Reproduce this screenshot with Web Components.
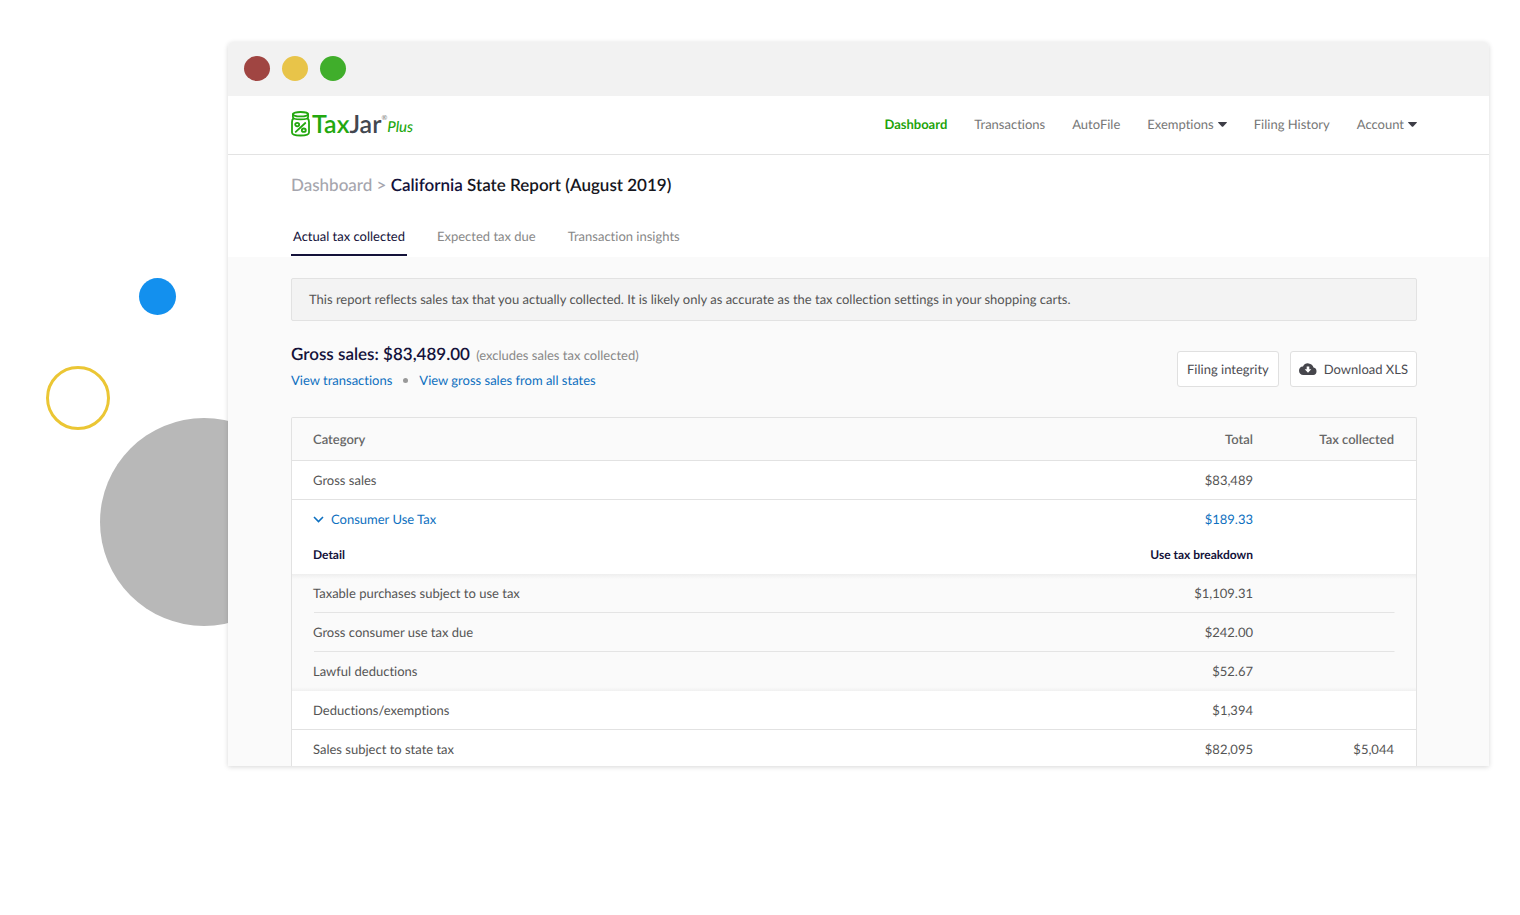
<!DOCTYPE html>
<html lang="en">
<head>
<meta charset="utf-8">
<meta name="viewport" content="width=device-width, initial-scale=1">
<title>California State Report - TaxJar</title>
<style>
    body {
        margin: 0;
        background: #fff;
        color: #555;
        font: 13px/20px Lato, "Liberation Sans", sans-serif;
        font-variant-ligatures: none;
        text-rendering: geometricPrecision;
    }
</style>
</head>
<body>
<report-stage>
    <browser-window>
        <nav-bar>
            <tax-logo slot="brand"></tax-logo>
            <nav-item active>Dashboard</nav-item>
            <nav-item>Transactions</nav-item>
            <nav-item>AutoFile</nav-item>
            <nav-item menu>Exemptions</nav-item>
            <nav-item>Filing History</nav-item>
            <nav-item menu>Account</nav-item>
        </nav-bar>
        <report-header parent="Dashboard" state="California" rest="State Report (August 2019)"></report-header>
        <report-body>
            <info-banner>This report reflects sales tax that you actually collected. It is likely only as accurate as the tax collection settings in your shopping carts.</info-banner>
            <sales-summary>
                <span slot="title">Gross sales: $83,489.00</span>
                <span slot="note">(excludes sales tax collected)</span>
                <action-button slot="actions">Filing integrity</action-button>
                <action-button slot="actions" icon>Download XLS</action-button>
            </sales-summary>
            <tax-table></tax-table>
        </report-body>
    </browser-window>
</report-stage>

<script>
class ReportStage extends HTMLElement {
    constructor() {
        super();
        this.attachShadow({ mode: 'open' }).innerHTML = `
            <style>
                :host {
                    display: block;
                    position: relative;
                    overflow: hidden;
                    box-sizing: border-box;
                    min-height: 100vh;
                    padding: 42px 31px 42px 228px;
                }
                .shape { position: absolute; box-sizing: border-box; border-radius: 50%; }
                .blue { left: 139px; top: 278px; width: 37px; height: 37px; background: #1390ee; }
                .ring { left: 46px; top: 366px; width: 64px; height: 64px; border: 3px solid #ebc634; }
                .gray { left: 100px; top: 418px; width: 208px; height: 208px; background: #b8b8b8; }
            </style>
            <div class="shape blue"></div>
            <div class="shape ring"></div>
            <div class="shape gray"></div>
            <slot></slot>
        `;
    }
}

class BrowserWindow extends HTMLElement {
    constructor() {
        super();
        this.attachShadow({ mode: 'open' }).innerHTML = `
            <style>
                :host {
                    display: block;
                    position: relative;
                    overflow: hidden;
                    background: #fff;
                    border-radius: 5px 5px 0 0;
                    box-shadow: 0 1px 5px rgba(0, 0, 0, 0.16);
                }
                .bar {
                    display: flex;
                    align-items: center;
                    gap: 12px;
                    height: 54px;
                    padding: 0 16px 2px;
                    box-sizing: border-box;
                    background: #f2f2f2;
                }
                .bar i { width: 26px; height: 25px; border-radius: 50%; }
                .close { background: #a04542; }
                .min { background: #e8c449; }
                .max { background: #40ae2b; }
            </style>
            <div class="bar"><i class="close"></i><i class="min"></i><i class="max"></i></div>
            <slot></slot>
        `;
    }
}

class NavBar extends HTMLElement {
    constructor() {
        super();
        this.attachShadow({ mode: 'open' }).innerHTML = `
            <style>
                :host {
                    display: flex;
                    align-items: center;
                    justify-content: space-between;
                    height: 56px;
                    padding: 0 72px 2px 63px;
                    border-bottom: 1px solid #e3e3e3;
                }
                nav { display: flex; gap: 27px; }
            </style>
            <slot name="brand"></slot>
            <nav><slot></slot></nav>
        `;
    }
}

class NavItem extends HTMLElement {
    constructor() {
        super();
        this.attachShadow({ mode: 'open' });
    }

    connectedCallback() {
        const isMenu = this.hasAttribute('menu');
        this.shadowRoot.innerHTML = `
            <style>
                :host { display: block; }
                a, button {
                    display: flex;
                    align-items: center;
                    gap: 4px;
                    padding: 0;
                    border: 0;
                    background: none;
                    color: #777;
                    font: inherit;
                    text-rendering: inherit;
                    text-decoration: none;
                    cursor: pointer;
                }
                :host([active]) a { color: #22a30a; font-weight: bold; }
            </style>
            ${isMenu
                ? `<button type="button" aria-haspopup="true"><slot></slot>
                    <svg width="9" height="5" viewBox="0 0 9 5" aria-hidden="true"><path d="M0 .5Q0 0 .6 0H8.4Q9 0 9 .5L5 4.7Q4.500 5 4 4.700Z" fill="#3d3d46"/></svg>
                </button>`
                : '<a href="#"><slot></slot></a>'}
        `;
    }
}

class TaxLogo extends HTMLElement {
    constructor() {
        super();
        this.attachShadow({ mode: 'open' }).innerHTML = `
            <style>
                :host { display: block; }
                a { display: flex; align-items: center; color: #23a80f; text-decoration: none; }
                svg { margin-right: 1px; }
                .name { font-size: 25px; line-height: 26px; font-weight: 600; }
                .jar { color: #43474f; }
                sup { align-self: flex-start; color: #777; font-size: 7px; line-height: 14px; }
                em { font-size: 15px; line-height: 20px; align-self: flex-end; font-weight: 500; }
            </style>
            <a href="#" aria-label="TaxJar Plus">
                <svg width="20" height="26" viewBox="0 0 20 26" fill="none" stroke="#23a80f" stroke-width="1.800" stroke-linecap="round">
                    <ellipse cx="9.500" cy="3.200" rx="7.600" ry="2.200"/>
                    <path d="M1.900 3.200V6C1.900 7.600 5 8.400 9.500 8.400S17.100 7.600 17.100 6V3.200"/>
                    <path d="M2.300 7.500C1.300 8.500 1 9.500 1 11V21.500C1 23.700 3.500 24.500 9.500 24.500S18 23.700 18 21.500V11C18 9.500 17.700 8.500 16.700 7.500"/>
                    <path d="M14.300 12L4.700 20.800"/>
                    <ellipse cx="6.200" cy="13.600" rx="2" ry="1.700"/>
                    <ellipse cx="12.800" cy="19.200" rx="2" ry="1.700"/>
                </svg>
                <span class="name">Tax<span class="jar">Jar</span></span><sup>®</sup><em>Plus</em>
            </a>
        `;
    }
}

class ReportHeader extends HTMLElement {
    constructor() {
        super();
        this.attachShadow({ mode: 'open' });
    }

    connectedCallback() {
        this.shadowRoot.innerHTML = `
            <style>
                :host { display: block; padding: 19px 72px 0 63px; }
                h1 { margin: 0 0 30px; font-size: 17px; line-height: 22px; font-weight: 600; color: #16161d; }
                h1 a { color: #a5a5ad; font-weight: 500; text-decoration: none; }
                h1 .sep { color: #a5a5ad; font-weight: 500; }
                h1 .state { color: #14123a; }
                .tabs { display: flex; gap: 28px; }
                button {
                    padding: 0 2px 8px;
                    border: 0;
                    border-bottom: 2px solid transparent;
                    background: none;
                    color: #888;
                    font: inherit;
                    text-rendering: inherit;
                    cursor: pointer;
                }
                button[aria-selected="true"] { color: #14123a; border-color: #14123a; }
            </style>
            <h1><a href="#">${this.getAttribute('parent')}</a> <span class="sep">&gt;</span> <span class="state">${this.getAttribute('state')}</span> ${this.getAttribute('rest')}</h1>
            <div class="tabs" role="tablist">
                <button type="button" role="tab" aria-selected="true">Actual tax collected</button>
                <button type="button" role="tab" aria-selected="false">Expected tax due</button>
                <button type="button" role="tab" aria-selected="false">Transaction insights</button>
            </div>
        `;
    }
}

class ReportBody extends HTMLElement {
    constructor() {
        super();
        this.attachShadow({ mode: 'open' }).innerHTML = `
            <style>
                :host {
                    display: block;
                    margin-top: 1px;
                    padding: 21px 72px 0 63px;
                    background: #fafafa;
                }
            </style>
            <slot></slot>
        `;
    }
}

class InfoBanner extends HTMLElement {
    constructor() {
        super();
        this.attachShadow({ mode: 'open' }).innerHTML = `
            <style>
                :host {
                    display: block;
                    padding: 10px 17px 11px;
                    border: 1px solid #e2e2e2;
                    border-radius: 2px;
                    background: #f3f3f3;
                }
            </style>
            <slot></slot>
        `;
    }
}

class SalesSummary extends HTMLElement {
    constructor() {
        super();
        this.attachShadow({ mode: 'open' }).innerHTML = `
            <style>
                :host { display: flex; justify-content: space-between; align-items: flex-start; margin: 21px 0 27px; }
                h2 { margin: 0 0 4px; font-size: 17px; line-height: 24px; font-weight: 600; color: #14123a; }
                .note { margin-left: 2px; font-size: 13px; line-height: 20px; font-weight: normal; color: #888; }
                .links { display: flex; align-items: center; gap: 11px; }
                .links i { width: 5px; height: 5px; border-radius: 50%; background: #999; }
                a { color: #0e70c0; text-decoration: none; }
                .actions { display: flex; gap: 11px; padding-top: 9px; }
            </style>
            <div>
                <h2><slot name="title"></slot> <span class="note"><slot name="note"></slot></span></h2>
                <div class="links">
                    <a href="#">View transactions</a><i></i><a href="#">View gross sales from all states</a>
                </div>
            </div>
            <div class="actions"><slot name="actions"></slot></div>
        `;
    }
}

class ActionButton extends HTMLElement {
    constructor() {
        super();
        this.attachShadow({ mode: 'open' });
    }

    connectedCallback() {
        const icon = `
            <svg width="18" height="12" viewBox="0 0 18 12" aria-hidden="true">
                <path d="M14.500 4.600A5.600 5.600 0 0 0 4 3.600 4.300 4.300 0 0 0 0 7.800C0 10.200 1.900 12 4.300 12H14.200A3.750 3.750 0 0 0 14.500 4.600Z" fill="#46464c"/>
                <path d="M7.700 3.400H10.300V6.300H12.300L9 9.800 5.700 6.300H7.700Z" fill="#fff"/>
            </svg>`;
        this.shadowRoot.innerHTML = `
            <style>
                :host { display: block; }
                button {
                    display: flex;
                    align-items: center;
                    gap: 7px;
                    padding: 7px 9px;
                    border: 1px solid #e0e0e0;
                    border-radius: 3px;
                    background: #fff;
                    color: #4c4c52;
                    font: inherit;
                    text-rendering: inherit;
                    cursor: pointer;
                }
                :host([icon]) button { padding: 7px 8px; }
            </style>
            <button type="button">${this.hasAttribute('icon') ? icon : ''}<slot></slot></button>
        `;
    }
}

class TaxTable extends HTMLElement {
    constructor() {
        super();
        this.attachShadow({ mode: 'open' });
        this.details = [
            ['Taxable purchases subject to use tax', '$1,109.31'],
            ['Gross consumer use tax due', '$242.00'],
            ['Lawful deductions', '$52.67']
        ];
    }

    connectedCallback() {
        this.render();
    }

    render() {
        this.shadowRoot.innerHTML = `
            <style>
                :host {
                    display: block;
                    border: 1px solid #e2e2e2;
                    border-bottom: 0;
                    border-radius: 2px 2px 0 0;
                }
                table { width: 100%; table-layout: fixed; border-collapse: separate; border-spacing: 0; }
                col.total { width: 180px; }
                col.tax { width: 163px; }
                th, td { box-sizing: border-box; height: 39px; padding: 0; text-align: right; font-weight: normal; }
                th:first-child, td:first-child { padding-left: 21px; text-align: left; }
                th:last-child, td:last-child { padding-right: 22px; }
                thead th { height: 43px; color: #666; font-weight: 600; border-bottom: 1px solid #e2e2e2; }
                tbody { background: #fff; }
                .line > * { border-bottom: 1px solid #e2e2e2; }
                .open td { height: 38px; color: #0e70c0; }
                .open button {
                    display: flex;
                    align-items: center;
                    gap: 7px;
                    padding: 0;
                    border: 0;
                    background: none;
                    color: inherit;
                    font: inherit;
                    text-rendering: inherit;
                    cursor: pointer;
                }
                .sub th { height: 36px; padding-bottom: 3px; font-size: 12px; font-weight: bold; color: #14123a; }
                .detail {
                    background: linear-gradient(#e4e4e4, #e4e4e4) no-repeat center bottom / calc(100% - 43px) 1px, #fafafa;
                }
                .detail td { padding-bottom: 2px; }
                .detail:first-child {
                    background: linear-gradient(#e4e4e4, #e4e4e4) no-repeat center bottom / calc(100% - 43px) 1px,
                        linear-gradient(#eee, #fafafa) no-repeat top / 100% 5px, #fafafa;
                }
                .detail:last-child { background: linear-gradient(#fafafa, #f0f0f0) no-repeat bottom / 100% 4px, #fafafa; }
                .last td { height: 36px; padding-top: 2px; }
            </style>
            <table>
                <colgroup><col><col class="total"><col class="tax"></colgroup>
                <thead>
                    <tr><th>Category</th><th>Total</th><th>Tax collected</th></tr>
                </thead>
                <tbody>
                    <tr class="line"><td>Gross sales</td><td>$83,489</td><td></td></tr>
                    <tr class="open">
                        <td><button type="button" aria-expanded="true">
                            <svg width="11" height="7" viewBox="0 0 11 7" fill="none" stroke="#0e70c0" stroke-width="1.600" aria-hidden="true"><path d="M1 1L5.500 5.500 10 1"/></svg>
                            Consumer Use Tax
                        </button></td>
                        <td>$189.33</td><td></td>
                    </tr>
                    <tr class="sub"><th>Detail</th><th>Use tax breakdown</th><th></th></tr>
                </tbody>
                <tbody>
                    ${this.details.map(([label, total]) => `<tr class="detail"><td>${label}</td><td>${total}</td><td></td></tr>`).join('')}
                </tbody>
                <tbody>
                    <tr class="line"><td>Deductions/exemptions</td><td>$1,394</td><td></td></tr>
                    <tr class="last"><td>Sales subject to state tax</td><td>$82,095</td><td>$5,044</td></tr>
                </tbody>
            </table>
        `;
    }
}

customElements.define('report-stage', ReportStage);
customElements.define('browser-window', BrowserWindow);
customElements.define('nav-bar', NavBar);
customElements.define('nav-item', NavItem);
customElements.define('tax-logo', TaxLogo);
customElements.define('report-header', ReportHeader);
customElements.define('report-body', ReportBody);
customElements.define('info-banner', InfoBanner);
customElements.define('sales-summary', SalesSummary);
customElements.define('action-button', ActionButton);
customElements.define('tax-table', TaxTable);
</script>
</body>
</html>
